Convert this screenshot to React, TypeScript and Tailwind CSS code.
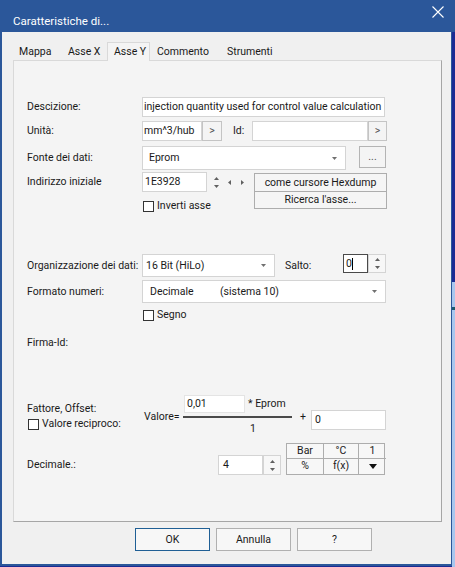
import React from "react";

const UpTri = () => (
  <svg width="5" height="3" viewBox="0 0 5 3"><path d="M2.5 0L5 3H0z" fill="#606060" /></svg>
);
const DownTri = () => (
  <svg width="5" height="3" viewBox="0 0 5 3"><path d="M0 0H5L2.5 3z" fill="#606060" /></svg>
);
const LeftTri = () => (
  <svg width="3" height="5" viewBox="0 0 3 5"><path d="M3 0V5L0 2.5z" fill="#606060" /></svg>
);
const RightTri = () => (
  <svg width="3" height="5" viewBox="0 0 3 5"><path d="M0 0V5L3 2.5z" fill="#606060" /></svg>
);
const ComboArrow = () => (
  <svg width="5" height="3" viewBox="0 0 5 3"><path d="M0 0H5L2.5 3z" fill="#707070" /></svg>
);

const Spin = ({ bordered }: { bordered?: boolean }) => (
  <div
    className={
      "flex flex-col items-center justify-center gap-[5px] " +
      (bordered ? "w-[18px] h-full border border-[#d4d4d4] bg-[#f7f7f7]" : "w-[5px] h-full")
    }
  >
    <UpTri />
    <DownTri />
  </div>
);

const CheckBox = ({ label }: { label: string }) => (
  <div className="flex items-center h-[12px]">
    <div className="w-[11px] h-[11px] border border-[#333] bg-white" />
    <span className="ml-[3px] leading-none">{label}</span>
  </div>
);

const Label = ({ children }: { children: React.ReactNode }) => (
  <div className="w-[115px] shrink-0 flex items-center">{children}</div>
);

export default function App() {
  return (
    <div className="w-[455px] h-[567px] flex bg-[#1b2b93] text-[10.5px] text-[#1a1a1a] font-['Segoe_UI',Roboto,sans-serif] whitespace-nowrap overflow-hidden">
      <div className="w-[452px] h-[566px] flex flex-col bg-[#f0f0f0] border-l-2 border-r border-b-2 border-[#2b579a]">
        {/* title bar */}
        <div className="h-[32px] shrink-0 bg-[#2b579a] flex justify-between">
          <div className="pl-[11px] pt-[13px] text-white text-[11.5px] leading-[16px]">Caratteristiche di...</div>
          <div className="pr-[7px] pt-[6px]">
            <svg width="12" height="12" viewBox="0 0 12 12">
              <path d="M0.5 0.5L11.5 11.5M11.5 0.5L0.5 11.5" stroke="#fff" strokeWidth="1.1" />
            </svg>
          </div>
        </div>

        {/* body */}
        <div className="flex flex-col pl-[11px]">
          {/* tabs */}
          <div className="flex items-end h-[19px] mt-[10px] relative z-10">
            <div className="w-[49px] h-[18px] pl-[6px] flex items-center">Mappa</div>
            <div className="w-[45px] h-[18px] pl-[6px] flex items-center">Asse X</div>
            <div className="w-[43px] h-[19px] pl-[6px] pb-[1px] flex items-center bg-[#f4f4f4] border-t border-x border-[#d9d9d9]">Asse Y</div>
            <div className="w-[70px] h-[18px] pl-[7px] flex items-center">Commento</div>
            <div className="w-[80px] h-[18px] pl-[7px] flex items-center">Strumenti</div>
          </div>

          {/* panel */}
          <div className="w-[429px] h-[462px] -mt-[1px] bg-[#f4f4f4] border border-[#d9d9d9] border-r-[#a6a6a6] border-b-[#a6a6a6] flex flex-col pl-[13px]">
            {/* Descizione */}
            <div className="flex h-[20px] mt-[36px]">
              <Label>Descizione:</Label>
              <div className="w-[243px] h-[20px] bg-white border border-[#d4d4d4] pl-[1px] flex items-center overflow-hidden">
                injection quantity used for control value calculation
              </div>
            </div>

            {/* Unità */}
            <div className="flex h-[20px] mt-[4px]">
              <Label>Unità:</Label>
              <div className="w-[60px] h-[20px] bg-white border border-[#d4d4d4] pl-[1px] flex items-center">mm^3/hub</div>
              <div className="w-[20px] h-[20px] border border-[#c4c4c4] bg-[#f4f4f4] flex items-center justify-center text-[#555]">&gt;</div>
              <div className="w-[30px] pl-[11px] flex items-center">Id:</div>
              <div className="w-[116px] h-[20px] bg-white border border-[#d4d4d4]" />
              <div className="w-[19px] h-[20px] border border-[#c4c4c4] bg-[#f4f4f4] flex items-center justify-center text-[#555]">&gt;</div>
            </div>

            {/* Fonte */}
            <div className="flex h-[24px] mt-[5px]">
              <Label>Fonte dei dati:</Label>
              <div className="w-[204px] h-[24px] bg-white border border-[#d4d4d4] pl-[6px] pr-[8px] flex items-center justify-between">
                <span>Eprom</span>
                <ComboArrow />
              </div>
              <div className="ml-[13px] w-[27px] h-[22px] border border-[#b4b4b4] bg-[#f4f4f4] flex items-center justify-center text-[#555] leading-none">...</div>
            </div>

            {/* Indirizzo */}
            <div className="flex h-[40px] mt-[2px]">
              <div className="w-[115px] shrink-0 h-[20px] flex items-center">Indirizzo iniziale</div>
              <div className="flex flex-col">
                <div className="flex h-[20px] items-center">
                  <div className="w-[65px] h-[20px] bg-white border border-[#d4d4d4] pl-[2px] flex items-center">1E3928</div>
                  <div className="ml-[7px] h-[20px]">
                    <Spin />
                  </div>
                  <div className="ml-[9px]"><LeftTri /></div>
                  <div className="ml-[10px]"><RightTri /></div>
                </div>
                <div className="mt-[8px] pl-[1px]">
                  <CheckBox label="Inverti asse" />
                </div>
              </div>
              <div className="ml-[10px] mt-[1px] flex flex-col">
                <div className="w-[133px] h-[19px] border border-[#adadad] bg-[#f5f5f5] flex items-center justify-center">come cursore Hexdump</div>
                <div className="w-[133px] h-[18px] -mt-[1px] border border-[#adadad] bg-[#f5f5f5] flex items-center justify-center">Ricerca l'asse...</div>
              </div>
            </div>

            {/* Organizzazione */}
            <div className="flex h-[23px] mt-[42px]">
              <Label>Organizzazione dei dati:</Label>
              <div className="w-[133px] h-[23px] bg-white border border-[#d4d4d4] pl-[3px] pr-[8px] flex items-center justify-between">
                <span>16 Bit (HiLo)</span>
                <ComboArrow />
              </div>
              <div className="w-[68px] pl-[10px] flex items-center">Salto:</div>
              <div className="w-[25px] h-[19px] bg-white border border-[#4a4a4a] pl-[2px] flex items-center">
                <span>0</span>
                <span className="w-px h-[12px] bg-black" />
              </div>
              <div className="h-[19px]"><Spin bordered /></div>
            </div>

            {/* Formato */}
            <div className="flex h-[23px] mt-[3px]">
              <Label>Formato numeri:</Label>
              <div className="w-[244px] h-[23px] bg-white border border-[#d4d4d4] pl-[7px] pr-[8px] flex items-center">
                <span className="w-[70px]">Decimale</span>
                <span>(sistema 10)</span>
                <span className="ml-auto"><ComboArrow /></span>
              </div>
            </div>

            {/* Segno */}
            <div className="flex mt-[6px] pl-[116px]">
              <CheckBox label="Segno" />
            </div>

            {/* Firma-Id */}
            <div className="flex h-[16px] mt-[14px] items-center">Firma-Id:</div>

            {/* Fattore */}
            <div className="flex h-[45px] mt-[44px]">
              <div className="w-[117px] shrink-0 flex flex-col">
                <div className="mt-[7px] leading-[14px]">Fattore, Offset:</div>
                <div className="mt-[2px] pl-[1px]">
                  <CheckBox label="Valore reciproco:" />
                </div>
              </div>
              <div className="flex flex-col">
                <div className="flex items-start h-[21px]">
                  <div className="w-[39px]" />
                  <div className="ml-[1px] w-[61px] h-[18px] bg-white border border-[#e4e4e4] pl-[2px] flex items-center">0,01</div>
                  <div className="ml-[3px] mt-[2px] leading-[14px]">* Eprom</div>
                </div>
                <div className="flex items-center h-[2px]">
                  <div className="w-[39px] flex items-center h-[2px]">
                    <span className="leading-none">Valore=</span>
                  </div>
                  <div className="w-[109px] h-[2px] bg-[#4a4a4a]" />
                  <div className="ml-[8px] leading-none">+</div>
                </div>
                <div className="flex h-[22px] items-center">
                  <div className="ml-[106px] leading-none">1</div>
                </div>
              </div>
              <div className="ml-[5px] mt-[15px] w-[75px] h-[20px] bg-white border border-[#d4d4d4] pl-[3px] flex items-center">0</div>
            </div>

            {/* Decimale */}
            <div className="flex mt-[3px] h-[32px]">
              <div className="w-[191px] shrink-0 pt-[14px]">Decimale.:</div>
              <div className="mt-[12px] w-[45px] h-[20px] bg-white border border-[#d4d4d4] pl-[4px] flex items-center">4</div>
              <div className="mt-[12px] h-[20px]"><Spin bordered /></div>
              <div className="ml-[5px] grid grid-cols-[37px_35px_27px] grid-rows-[15px_15px] w-[99px] border border-[#adadad] bg-[#f7f7f7]">
                <div className="border-r border-b border-[#adadad] flex items-center justify-center leading-none">Bar</div>
                <div className="border-r border-b border-[#adadad] flex items-center justify-center leading-none">°C</div>
                <div className="border-b border-[#adadad] flex items-center justify-center leading-none">1</div>
                <div className="border-r border-[#adadad] flex items-center justify-center leading-none">%</div>
                <div className="border-r border-[#adadad] flex items-center justify-center leading-none">f(x)</div>
                <div className="flex items-center justify-center">
                  <svg width="8" height="5" viewBox="0 0 8 5"><path d="M0 0H8L4 5z" fill="#111" /></svg>
                </div>
              </div>
            </div>
          </div>

          {/* buttons */}
          <div className="flex gap-[6px] mt-[6px] pl-[122px]">
            <div className="w-[75px] h-[23px] border border-[#1f5f95] bg-[#f7f7f7] flex items-center justify-center">OK</div>
            <div className="w-[75px] h-[23px] border border-[#b0b0b0] bg-[#f7f7f7] flex items-center justify-center">Annulla</div>
            <div className="w-[75px] h-[23px] border border-[#b0b0b0] bg-[#f7f7f7] flex items-center justify-center">?</div>
          </div>
        </div>
      </div>
      <div className="flex-1 flex flex-col">
        <div className="h-[32px] bg-[#2b579a]" />
        <div className="h-[250px] bg-[#1b2b93]" />
        <div className="h-[25px] bg-[#a9c7ee]" />
        <div className="h-[3px] bg-[#1d5a6e]" />
        <div className="flex-1 bg-[#a9c7ee]" />
      </div>
    </div>
  );
}
